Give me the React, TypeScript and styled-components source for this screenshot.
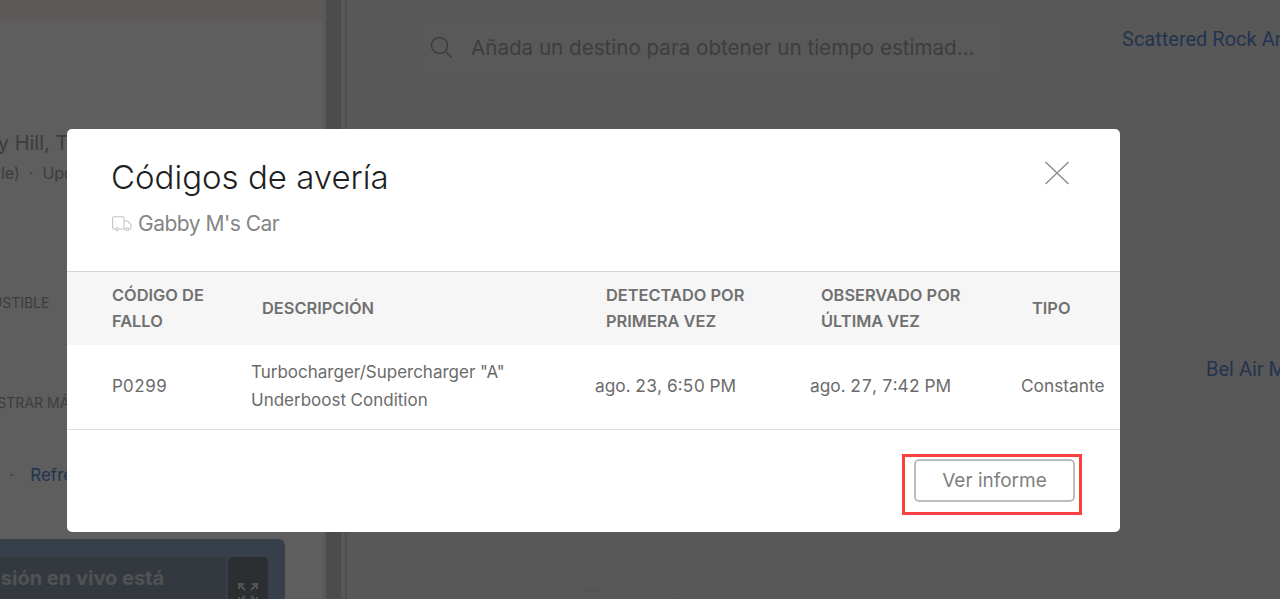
import React from "react";
import styled, { createGlobalStyle } from "styled-components";

const Global = createGlobalStyle`
  html, body { margin: 0; height: 100%; overflow: hidden; background: #eeeeee; }
  body { font-family: Inter, "Liberation Sans", sans-serif; }
  #root { height: 100%; }
`;

const Page = styled.div`
  position: relative;
  width: 1280px;
  height: 599px;
  display: grid;
  grid-template-columns: 323px 3px 15px 4px 2px 1fr;
  overflow: hidden;
`;

const SidePanel = styled.aside`
  background: #ffffff;
  display: flex;
  flex-direction: column;
  overflow: hidden;
`;

const AlertBand = styled.div`
  height: 20px;
  flex: none;
  background: #fff2f0;
`;

const SideText = styled.div<{ $top: number; $left?: number; $size?: number }>`
  margin-top: ${(p) => p.$top}px;
  margin-left: ${(p) => p.$left ?? 0}px;
  font-size: ${(p) => p.$size ?? 16}px;
  line-height: 20px;
  height: 20px;
  white-space: nowrap;
  color: #a6a6a6;
`;

const SideLink = styled.span`
  margin-left: 2px;
  color: #5a8ad8;
`;

const LiveCard = styled.div`
  margin-top: 54px;
  width: 285px;
  height: 120px;
  flex: none;
  padding: 18px 17px 0 0;
  box-sizing: border-box;
  border-radius: 0 6px 6px 0;
  background: #96afc8;
  display: flex;
  gap: 2px;
`;

const LiveBody = styled.div`
  flex: 1;
  background: #8c9baa;
  overflow: hidden;
  padding-top: 9px;
  font-size: 20px;
  font-weight: 700;
  line-height: 24px;
  color: #d8dee4;
  white-space: nowrap;
  text-indent: -101px;
`;

const ExpandButton = styled.div`
  width: 40px;
  flex: none;
  background: #788087;
  border-radius: 5px 5px 0 0;
  display: flex;
  justify-content: center;
  padding-top: 25px;
  color: #e0e4e8;
`;

const Gutter = styled.div<{ $tone: string }>`
  background: ${(p) => p.$tone};
`;

const MapArea = styled.main`
  position: relative;
  background: #eeeeee;
  overflow: hidden;
`;

const RoadLayer = styled.svg`
  position: absolute;
  left: 0;
  top: 0;
  width: 933px;
  height: 599px;
`;

const SearchShell = styled.div`
  position: absolute;
  left: 37px;
  top: 0;
  width: 676px;
  height: 110px;
  border: 1px solid #ebebeb;
  border-top: 0;
  box-sizing: border-box;
`;

const SearchBox = styled.div`
  margin: 22px 0 0 33px;
  width: 586px;
  height: 50px;
  box-sizing: border-box;
  border: 1px solid #ebebeb;
  background: #f1f1f1;
  display: flex;
  align-items: center;
  gap: 19px;
  padding-left: 11px;
  color: #a8a8a8;
  font-size: 20.6px;
  white-space: nowrap;
`;

const MapLabel = styled.span<{ $x: number; $y: number }>`
  position: absolute;
  left: ${(p) => p.$x}px;
  top: ${(p) => p.$y}px;
  font-family: Roboto, "Liberation Sans", sans-serif;
  font-size: 20px;
  line-height: 24px;
  white-space: nowrap;
  color: #5f8ed6;
`;

const Backdrop = styled.div`
  position: absolute;
  inset: 0;
  background: rgba(0, 0, 0, 0.63);
`;

const Modal = styled.section`
  position: absolute;
  left: 67px;
  top: 129px;
  width: 1053px;
  height: 403px;
  background: #ffffff;
  border-radius: 5px;
  overflow: hidden;
  display: flex;
  flex-direction: column;
  color: #6b6b6b;
`;

const ModalHeader = styled.header`
  position: relative;
  height: 143px;
  flex: none;
  box-sizing: border-box;
  padding: 28px 45px 0 44px;
  border-bottom: 1px solid #d4d4d4;
`;

const Title = styled.h1`
  margin: 0;
  font-size: 33px;
  line-height: 40px;
  font-weight: 300;
  color: #1f1f1f;
`;

const Subtitle = styled.div`
  margin-top: 15px;
  padding-left: 1px;
  display: flex;
  align-items: center;
  gap: 6px;
  font-size: 21px;
  letter-spacing: -0.5px;
  line-height: 24px;
  color: #858585;
`;

const CloseButton = styled.button`
  position: absolute;
  right: 50px;
  top: 32px;
  width: 26px;
  height: 24px;
  padding: 0;
  border: 0;
  background: none;
  color: #8c8c8c;
  display: block;
`;

const TableRow = styled.div`
  display: grid;
  grid-template-columns: 139px 344px 215px 211px 1fr;
  padding-left: 45px;
  align-items: center;
`;

const HeadRow = styled(TableRow)`
  height: 71px;
  padding-bottom: 2px;
  flex: none;
  background: #f6f6f6;
`;

const BodyRow = styled(TableRow)`
  height: 82px;
  padding-bottom: 2px;
  flex: none;
  border-bottom: 1px solid #dedede;
`;

const HeadCell = styled.div<{ $flush?: boolean }>`
  padding-left: ${(p) => (p.$flush ? 0 : 11)}px;
  font-size: 16.4px;
  line-height: 26px;
  font-weight: 600;
  color: #707070;
`;

const BodyCell = styled.div<{ $wide?: boolean }>`
  font-size: ${(p) => (p.$wide ? 17.3 : 17)}px;
  line-height: 28px;
  font-variant-numeric: tabular-nums;
  color: #6b6b6b;
  white-space: nowrap;
`;

const Footer = styled.footer`
  flex: 1;
  display: flex;
  justify-content: flex-end;
  align-items: flex-start;
  padding: 24px 38px 0 0;
`;

const Highlight = styled.div`
  border: 3px solid #fa4040;
  padding: 2px 4px 10px 9px;
`;

const ReportButton = styled.button`
  display: block;
  width: 161px;
  height: 43px;
  box-sizing: border-box;
  border: 2px solid #bdbdbd;
  border-radius: 5px;
  background: #fff;
  font-family: inherit;
  font-size: 19px;
  color: #7f7f7f;
  padding: 0;
`;

const columns = [
  { head: ["CÓDIGO DE", "FALLO"], flush: true },
  { head: ["DESCRIPCIÓN"] },
  { head: ["DETECTADO POR", "PRIMERA VEZ"] },
  { head: ["OBSERVADO POR", "ÚLTIMA VEZ"] },
  { head: ["TIPO"] },
];

const TruckIcon = () => (
  <svg width="20" height="16" viewBox="0 0 20 16" fill="none" stroke="#c4c4c4" strokeWidth="1.1">
    <path d="M3 13H2a1.4 1.4 0 0 1-1.4-1.4V2A1.4 1.4 0 0 1 2 .8h8.6A1.4 1.4 0 0 1 12 2v11H7" />
    <path d="M12 5h3.6L19 8.6v3a1.4 1.4 0 0 1-1.4 1.4H17M13.5 13H12" />
    <circle cx="5" cy="13.3" r="1.4" />
    <circle cx="15.2" cy="13.3" r="1.4" />
  </svg>
);

export default function App() {
  return (
    <Page>
      <Global />
      <SidePanel>
        <AlertBand />
        <SideText $top={113} $left={-56} $size={20}>Cherry Hill, TX</SideText>
        <SideText $top={10} $left={-19}>(Idle) &nbsp;·&nbsp; Updated</SideText>
        <SideText $top={110} $left={-51} $size={14}>COMBUSTIBLE</SideText>
        <SideText $top={80} $left={-26} $size={14}>MOSTRAR MÁS</SideText>
        <SideText $top={52} $left={9} $size={17}>· &nbsp;&nbsp;<SideLink>Refresh</SideLink></SideText>
        <LiveCard>
          <LiveBody>La transmisión en vivo está</LiveBody>
          <ExpandButton>
            <svg width="22" height="22" viewBox="0 0 22 22" fill="none" stroke="currentColor" strokeWidth="2">
              <path d="M2 7V2h5M2 2l6 6M15 2h5v5M20 2l-6 6M2 15v5h5M2 20l6-6M20 15v5h-5M20 20l-6-6" />
            </svg>
          </ExpandButton>
        </LiveCard>
      </SidePanel>
      <Gutter $tone="#eeeeee" />
      <Gutter $tone="#cdcdcd" />
      <Gutter $tone="#ececec" />
      <Gutter $tone="#d6d6d6" />
      <MapArea>
        <RoadLayer viewBox="347 0 933 599" fill="none" stroke="#f1f1f1" strokeWidth="2">
          <path d="M1240 85L1180 115L1150 150M1170 95L1182 115M1280 155L1250 165M1125 505L1215 565L1280 572M1215 565L1208 599M1170 410L1210 425L1235 460M1200 420L1215 408M628 532V599M665 599L730 580L760 575M1034 0V110M1060 0V120" />
          <path d="M585 590h14" stroke="#dce5f0" strokeWidth="5" />
        </RoadLayer>
        <SearchShell>
          <SearchBox>
            <svg width="22" height="22" viewBox="0 0 22 22" fill="none" stroke="#a0a0a0" strokeWidth="1.5">
              <circle cx="9.5" cy="9.5" r="8" />
              <path d="M15.3 15.3L21.5 21.5" />
            </svg>
            Añada un destino para obtener un tiempo estimad...
          </SearchBox>
        </SearchShell>
        <MapLabel $x={775} $y={27}>Scattered Rock Area</MapLabel>
        <MapLabel $x={859} $y={357}>Bel Air Meadows</MapLabel>
      </MapArea>
      <Backdrop />
      <Modal>
        <ModalHeader>
          <Title>Códigos de avería</Title>
          <Subtitle>
            <TruckIcon />
            Gabby M's Car
          </Subtitle>
          <CloseButton aria-label="Cerrar">
            <svg width="26" height="24" viewBox="0 0 26 24" fill="none" stroke="currentColor" strokeWidth="1.4">
              <path d="M1.5 1L24.5 23M24.5 1L1.5 23" />
            </svg>
          </CloseButton>
        </ModalHeader>
        <HeadRow>
          {columns.map((c) => (
            <HeadCell key={c.head[0]} $flush={c.flush}>
              {c.head.map((line) => (
                <div key={line}>{line}</div>
              ))}
            </HeadCell>
          ))}
        </HeadRow>
        <BodyRow>
          <BodyCell>P0299</BodyCell>
          <BodyCell>
            Turbocharger/Supercharger "A"
            <br />
            Underboost Condition
          </BodyCell>
          <BodyCell $wide>ago. 23, 6:50 PM</BodyCell>
          <BodyCell $wide>ago. 27, 7:42 PM</BodyCell>
          <BodyCell $wide>Constante</BodyCell>
        </BodyRow>
        <Footer>
          <Highlight>
            <ReportButton>Ver informe</ReportButton>
          </Highlight>
        </Footer>
      </Modal>
    </Page>
  );
}
